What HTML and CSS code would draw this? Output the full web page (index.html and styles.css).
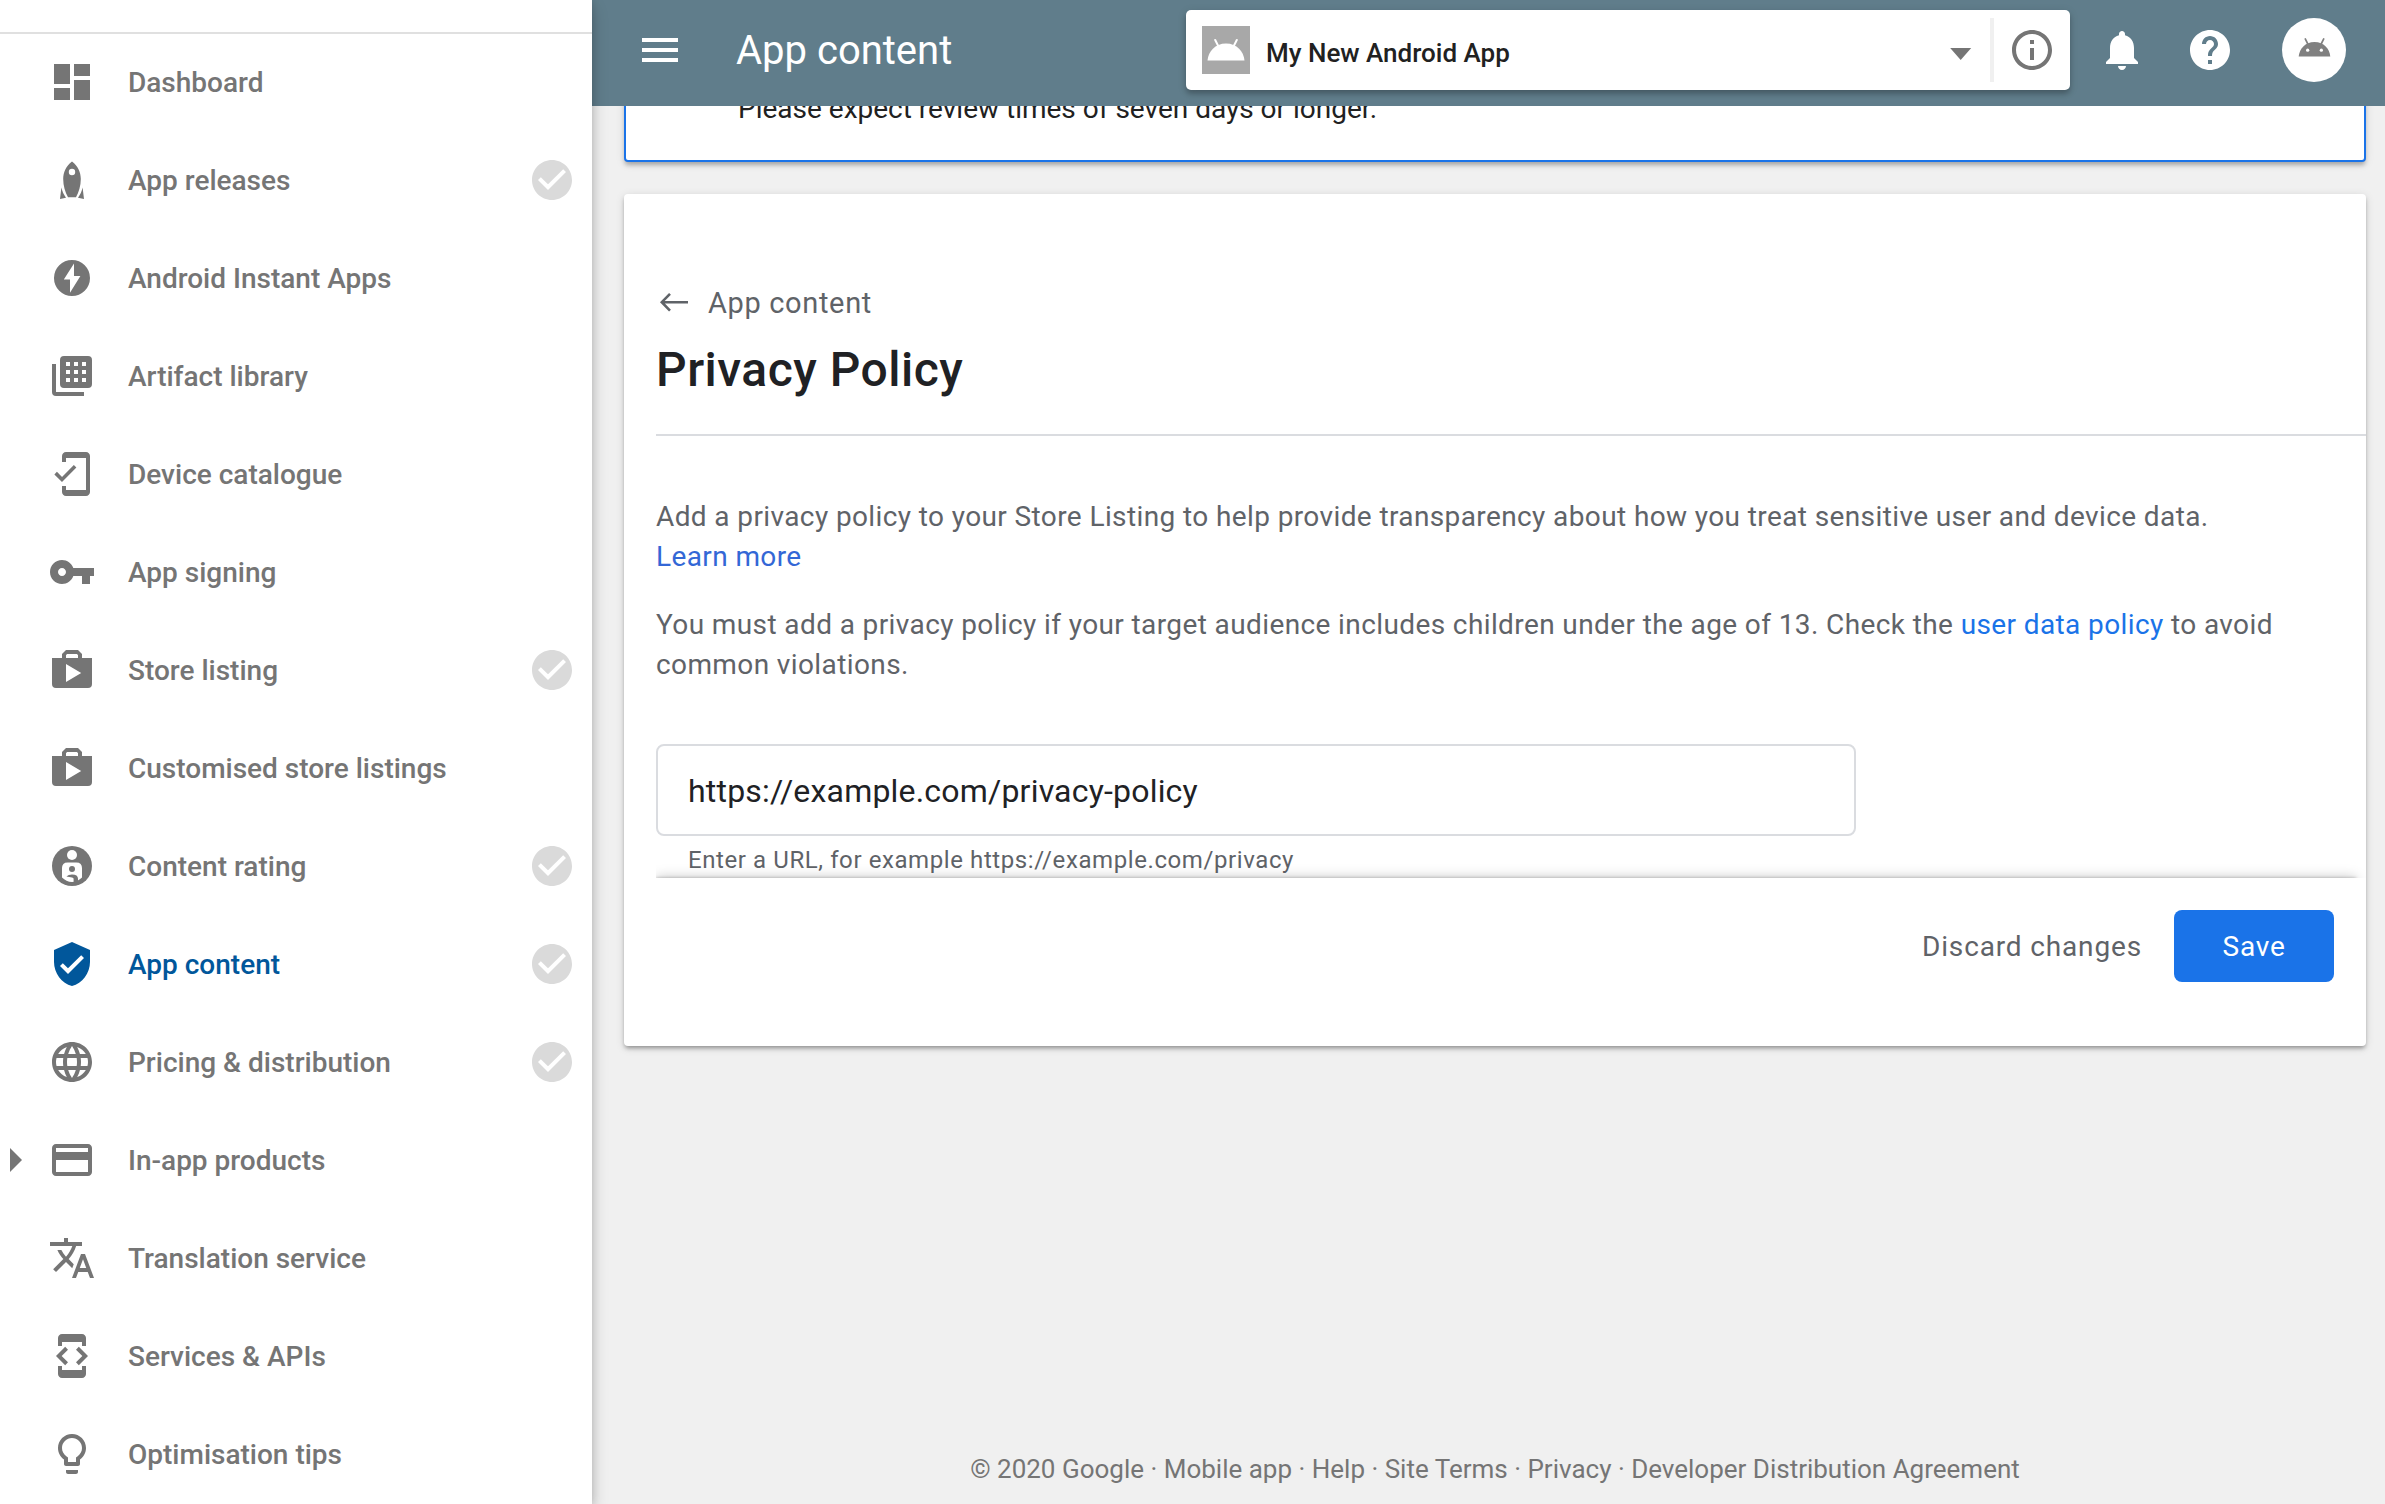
FILE: index.html
```html
<!DOCTYPE html>
<html lang="en-GB">
<head>
<meta charset="utf-8">
<title>App content</title>
<link rel="stylesheet" href="styles.css">
</head>
<body>
<svg class="symbols" aria-hidden="true">
  <symbol id="done" viewBox="0 0 24 24"><path d="M12 2C6.48 2 2 6.48 2 12s4.48 10 10 10 10-4.48 10-10S17.52 2 12 2zm-2 15l-5-5 1.41-1.41L10 14.17l7.59-7.59L19 8l-9 9z"/></symbol>
  <symbol id="shop" viewBox="0 0 24 24"><path fill-rule="evenodd" d="M2 6h5V4l2-2h6l2 2v2h5v13a2 2 0 0 1-2 2H4a2 2 0 0 1-2-2zM9.5 4L9 4.6V6h6V4.600L14.500 4zM9 18l7.600-4.500L9 9z"/></symbol>
  <symbol id="android" viewBox="0 0 48 48"><path d="M5.500 34.500C6.300 25.500 13 17.500 24 17.500S41.700 25.500 42.500 34.500z"/><path d="M13.200 14l3.300 6.500M34.800 14l-3.300 6.500" fill="none" stroke="currentColor" stroke-width="2" stroke-linecap="round"/><circle class="eye" cx="16" cy="27.200" r="1.900"/><circle class="eye" cx="32" cy="27.200" r="1.900"/></symbol>
</svg>
<div class="app">
  <nav class="sidebar">
    <div class="sidebar-top"></div>
    <ul class="nav-list">
      <li class="nav-item"><svg class="icon" viewBox="0 0 24 24"><path d="M3 13h8V3H3v10zm0 8h8v-6H3v6zm10 0h8V11h-8v10zm0-18v6h8V3h-8z"/></svg><span class="nav-label">Dashboard</span></li>
      <li class="nav-item"><svg class="icon" viewBox="0 0 24 24"><path fill-rule="evenodd" d="M12 2.700C9 5 7.600 8 7.600 11.500c0 3.500 1 6.500 2.400 9.100h4c1.400-2.600 2.400-5.600 2.400-9.100C16.400 8 15 5 12 2.700zM12 6.400a1.600 1.600 0 1 1 0 3.200 1.600 1.600 0 0 1 0-3.200z"/><path d="M6.700 15.800L6 21.500l3-.6c-1.100-1.500-1.900-3.200-2.300-5.100zM17.300 15.800l.7 5.700-3-.6c1.100-1.500 1.900-3.200 2.300-5.100z"/></svg><span class="nav-label">App releases</span><svg class="icon done"><use href="#done"/></svg></li>
      <li class="nav-item"><svg class="icon" viewBox="0 0 24 24"><path fill-rule="evenodd" d="M12 3a9 9 0 1 0 0 18 9 9 0 0 0 0-18zm1 1.700V11h3.200L11 19.400v-6.600H7.900z"/></svg><span class="nav-label">Android Instant Apps</span></li>
      <li class="nav-item"><svg class="icon" viewBox="0 0 24 24"><path d="M2 6v14a2 2 0 0 0 2 2h14v-2H4V6z"/><path fill-rule="evenodd" d="M8 2h12a2 2 0 0 1 2 2v12a2 2 0 0 1-2 2H8a2 2 0 0 1-2-2V4a2 2 0 0 1 2-2zM9 5v2h2V5zM13 5v2h2V5zM17 5v2h2V5zM9 9v2h2V9zM13 9v2h2V9zM17 9v2h2V9zM9 13v2h2v-2zM13 13v2h2v-2zM17 13v2h2v-2z"/></svg><span class="nav-label">Artifact library</span></li>
      <li class="nav-item"><svg class="icon" viewBox="0 0 24 24"><path d="M19 1H9c-1.100 0-2 .9-2 2v3h2V4h10v16H9v-2H7v3c0 1.100.9 2 2 2h10c1.100 0 2-.9 2-2V3c0-1.100-.9-2-2-2zM7.010 13.470l-2.550-2.550-1.270 1.270L7 16l7.190-7.190-1.270-1.270z"/></svg><span class="nav-label">Device catalogue</span></li>
      <li class="nav-item"><svg class="icon" viewBox="0 0 24 24"><path d="M12.650 10C11.830 7.670 9.610 6 7 6c-3.310 0-6 2.690-6 6s2.690 6 6 6c2.610 0 4.830-1.670 5.650-4H17v4h4v-4h2v-4H12.650zM7 14c-1.100 0-2-.9-2-2s.9-2 2-2 2 .9 2 2-.9 2-2 2z"/></svg><span class="nav-label">App signing</span></li>
      <li class="nav-item"><svg class="icon"><use href="#shop"/></svg><span class="nav-label">Store listing</span><svg class="icon done"><use href="#done"/></svg></li>
      <li class="nav-item"><svg class="icon"><use href="#shop"/></svg><span class="nav-label">Customised store listings</span></li>
      <li class="nav-item"><svg class="icon" viewBox="0 0 24 24"><circle cx="12" cy="12" r="10"/><circle class="cut" cx="12" cy="6.500" r="2.500"/><path class="cut" d="M7 13q0-2.800 2.800-2.800h4.400q2.800 0 2.800 2.800v4.700a8 8 0 0 1-5 2.300 8 8 0 0 1-5-2.300z"/><circle cx="12" cy="13.500" r="1.500"/><path d="M9.200 17.300q1-1.100 2.800-1.100 3 0 3 2.200V20.500h-2.200v-2.100q0-.6-.8-.7z"/></svg><span class="nav-label">Content rating</span><svg class="icon done"><use href="#done"/></svg></li>
      <li class="nav-item active"><svg class="icon" viewBox="0 0 24 24"><path d="M12 1L3 5v6c0 5.550 3.840 10.740 9 12 5.160-1.260 9-6.450 9-12V5l-9-4zm-2 16l-4-4 1.410-1.410L10 14.170l6.590-6.590L18 9l-8 8z"/></svg><span class="nav-label">App content</span><svg class="icon done"><use href="#done"/></svg></li>
      <li class="nav-item"><svg class="icon" viewBox="0 0 24 24"><path d="M11.990 2C6.470 2 2 6.480 2 12s4.470 10 9.990 10C17.520 22 22 17.520 22 12S17.520 2 11.990 2zm6.930 6h-2.950c-.32-1.250-.78-2.450-1.380-3.560 1.840.63 3.370 1.910 4.330 3.560zM12 4.040c.83 1.200 1.480 2.530 1.910 3.960h-3.820c.43-1.430 1.080-2.760 1.910-3.960zM4.260 14C4.100 13.360 4 12.690 4 12s.1-1.360.26-2h3.380c-.08.66-.14 1.320-.14 2s.06 1.340.14 2H4.260zm.82 2h2.950c.32 1.250.78 2.450 1.380 3.560-1.840-.63-3.370-1.900-4.330-3.560zm2.950-8H5.080c.96-1.660 2.490-2.930 4.330-3.560C8.810 5.550 8.350 6.750 8.030 8zM12 19.960c-.83-1.200-1.480-2.530-1.910-3.960h3.820c-.43 1.430-1.080 2.760-1.910 3.960zM14.340 14H9.660c-.09-.66-.16-1.320-.16-2s.07-1.350.16-2h4.680c.09.65.16 1.320.16 2s-.07 1.340-.16 2zm.25 5.560c.6-1.110 1.060-2.310 1.380-3.560h2.950c-.96 1.650-2.490 2.930-4.330 3.560zM16.360 14c.08-.66.14-1.320.14-2s-.06-1.340-.14-2h3.380c.16.64.26 1.310.26 2s-.1 1.360-.26 2h-3.380z"/></svg><span class="nav-label">Pricing &amp; distribution</span><svg class="icon done"><use href="#done"/></svg></li>
      <li class="nav-item"><span class="expander"></span><svg class="icon" viewBox="0 0 24 24"><path d="M20 4H4c-1.110 0-1.990.89-1.990 2L2 18c0 1.110.89 2 2 2h16c1.110 0 2-.89 2-2V6c0-1.110-.89-2-2-2zm0 14H4v-6h16v6zm0-10H4V6h16v2z"/></svg><span class="nav-label">In-app products</span></li>
      <li class="nav-item"><svg class="icon" viewBox="0 0 24 24"><path d="M12.870 15.070l-2.540-2.510.03-.03c1.740-1.940 2.980-4.170 3.710-6.530H17V4h-7V2H8v2H1v1.990h11.170C11.500 7.920 10.440 9.750 9 11.350 8.070 10.320 7.300 9.190 6.690 8h-2c.73 1.630 1.730 3.170 2.980 4.560l-5.090 5.020L4 19l5-5 3.110 3.110.76-2.040zM18.500 10h-2L12 22h2l1.120-3h4.750L21 22h2l-4.500-12zm-2.620 7l1.620-4.330L19.120 17h-3.240z"/></svg><span class="nav-label">Translation service</span></li>
      <li class="nav-item"><svg class="icon" viewBox="0 0 24 24"><path d="M7 5h10v2h2V3c0-1.100-.9-1.990-2-1.990L7 1c-1.100 0-2 .9-2 2v4h2V5zm8.410 11.590L20 12l-4.590-4.590L14 8.830 17.170 12 14 15.170l1.410 1.420zM10 15.170L6.830 12 10 8.830 8.590 7.410 4 12l4.590 4.590L10 15.170zM17 19H7v-2H5v4c0 1.100.9 2 2 2h10c1.100 0 2-.9 2-2v-4h-2v2z"/></svg><span class="nav-label">Services &amp; APIs</span></li>
      <li class="nav-item"><svg class="icon" viewBox="0 0 24 24"><path d="M9 21c0 .55.45 1 1 1h4c.55 0 1-.45 1-1v-1H9v1zm3-19C8.140 2 5 5.140 5 9c0 2.380 1.190 4.470 3 5.740V17c0 .55.45 1 1 1h6c.55 0 1-.45 1-1v-2.260c1.810-1.270 3-3.360 3-5.740 0-3.860-3.140-7-7-7zm2.850 11.100l-.85.6V16h-4v-2.300l-.85-.6C7.800 12.160 7 10.630 7 9c0-2.760 2.240-5 5-5s5 2.240 5 5c0 1.630-.8 3.160-2.150 4.100z"/></svg><span class="nav-label">Optimisation tips</span></li>
    </ul>
  </nav>

  <div class="page">
    <header class="topbar">
      <svg class="icon" viewBox="0 0 24 24"><path d="M3 18h18v-2H3v2zm0-5h18v-2H3v2zm0-7v2h18V6H3z"/></svg>
      <h1 class="topbar-title">App content</h1>
      <div class="app-picker">
        <span class="app-thumb"><svg class="icon"><use href="#android"/></svg></span>
        <span class="app-name">My New Android App</span>
        <svg class="icon" viewBox="0 0 24 24"><path d="M7.100 11h10.500l-5.250 6z"/></svg>
        <span class="picker-divider"></span>
        <svg class="icon info" viewBox="0 0 24 24"><path d="M11 17h2v-6h-2v6zm1-15C6.480 2 2 6.480 2 12s4.480 10 10 10 10-4.480 10-10S17.520 2 12 2zm0 18c-4.410 0-8-3.590-8-8s3.590-8 8-8 8 3.590 8 8-3.590 8-8 8zM11 9h2V7h-2v2z"/></svg>
      </div>
      <svg class="icon bell" viewBox="0 0 24 24"><path d="M12 22c1.100 0 2-.9 2-2h-4c0 1.100.89 2 2 2zm6-6v-5c0-3.070-1.640-5.640-4.500-6.320V4c0-.83-.67-1.500-1.500-1.500s-1.500.67-1.500 1.500v.68C7.630 5.360 6 7.920 6 11v5l-2 2v1h16v-1l-2-2z"/></svg>
      <svg class="icon help" viewBox="0 0 24 24"><path d="M12 2C6.480 2 2 6.480 2 12s4.480 10 10 10 10-4.480 10-10S17.520 2 12 2zm1 17h-2v-2h2v2zm2.070-7.750l-.9.92C13.450 12.900 13 13.500 13 15h-2v-.5c0-1.100.45-2.100 1.170-2.830l1.240-1.260c.37-.36.59-.86.59-1.410 0-1.100-.9-2-2-2s-2 .9-2 2H8c0-2.210 1.790-4 4-4s4 1.790 4 4c0 .88-.36 1.680-.93 2.250z"/></svg>
      <span class="avatar"><svg class="avatar-icon"><use href="#android"/></svg></span>
    </header>

    <main class="content">
      <section class="banner"><p class="banner-text">Please expect review times of seven days or longer.</p></section>

      <section class="card">
        <a class="crumb"><svg class="crumb-icon" viewBox="0 0 36 36"><path d="M32 17.200H6M14 8.800L5.800 17.200l8.200 8.400" fill="none" stroke="currentColor" stroke-width="2.600"/></svg>App content</a>
        <h2 class="card-title">Privacy Policy</h2>
        <div class="card-body">
          <p class="copy">Add a privacy policy to your Store Listing to help provide transparency about how you treat sensitive user and device data.<br><a class="link learn">Learn more</a></p>
          <p class="copy">You must add a privacy policy if your target audience includes children under the age of 13. Check the <a class="link">user data policy</a> to avoid<br>common violations.</p>
          <div class="field">https://example.com/privacy-policy</div>
          <p class="hint">Enter a URL, for example https://example.com/privacy</p>
        </div>
        <div class="actions">
          <span class="discard">Discard changes</span>
          <span class="save">Save</span>
        </div>
      </section>

      <footer class="footer">© 2020 Google · Mobile app · Help · Site Terms · Privacy · Developer Distribution Agreement</footer>
    </main>
  </div>
</div>
</body>
</html>
```
FILE: styles.css
```css
* { box-sizing: border-box; }

body {
  margin: 0;
  font-family: Roboto, "Noto Sans", sans-serif;
  background: #f0f0f0;
}

h1, h2, p, ul { margin: 0; padding: 0; font-weight: 400; }

.symbols { display: none; }

.app {
  display: flex;
  height: 1504px;
  overflow: hidden;
}

.icon {
  width: 48px;
  height: 48px;
  flex: none;
  fill: currentColor;
}

/* Sidebar */
.sidebar {
  position: relative;
  z-index: 3;
  flex: none;
  width: 592px;
  height: 1504px;
  background: #fff;
  box-shadow: 0 0 8px rgba(0, 0, 0, .14), 0 8px 16px rgba(0, 0, 0, .2);
}

.sidebar-top {
  height: 34px;
  border-bottom: 2px solid #e0e0e0;
}

.nav-list {
  margin-top: -1px;
  list-style: none;
}

.nav-item {
  position: relative;
  display: flex;
  align-items: center;
  height: 98px;
  padding: 0 16px 0 48px;
  color: #757575;
}

.nav-label {
  flex: 1;
  margin-left: 32px;
  padding-top: 2px;
  font-size: 28px;
  font-weight: 500;
  line-height: 40px;
}

.active { color: #01579b; }
.done { color: #dadada; }
.cut { fill: #fff; }

.expander {
  position: absolute;
  left: 10px;
  top: 37px;
  border-left: 12px solid #757575;
  border-top: 12px solid transparent;
  border-bottom: 12px solid transparent;
}

/* Top bar */
.page {
  flex: 1;
  display: flex;
  flex-direction: column;
}

.topbar {
  position: relative;
  z-index: 2;
  flex: none;
  display: flex;
  align-items: center;
  height: 106px;
  padding: 0 39px 6px 44px;
  background: #607d8b;
  color: #fff;
}

.topbar-title {
  flex: 1;
  margin-left: 52px;
  padding-top: 2px;
  font-size: 40px;
  line-height: 48px;
}

.app-picker {
  display: flex;
  align-items: center;
  width: 884px;
  height: 80px;
  padding: 0 14px 0 16px;
  border-radius: 5px;
  background: #fff;
  color: #757575;
  box-shadow: 0 4px 5px rgba(0, 0, 0, .2), 0 2px 10px rgba(0, 0, 0, .12);
}

.app-thumb {
  display: flex;
  background: #a8a8a8;
  color: #fff;
}

.app-thumb .eye { fill: #a8a8a8; }

.app-name {
  flex: 1;
  margin-left: 16px;
  padding-top: 6px;
  color: #212121;
  font-size: 26px;
  font-weight: 500;
  line-height: 32px;
}

.picker-divider {
  width: 4px;
  height: 64px;
  margin: 0 14px 0 6px;
  background: #f0f0f0;
}

.bell { margin-left: 28px; }
.help { margin-left: 40px; }

.avatar {
  display: flex;
  align-items: center;
  justify-content: center;
  width: 64px;
  height: 64px;
  margin-left: 48px;
  padding-bottom: 6px;
  border-radius: 50%;
  background: #fff;
  color: #808080;
}

.avatar-icon {
  width: 41px;
  height: 41px;
  fill: currentColor;
}

.eye { fill: #fff; }

/* Content */
.content {
  flex: 1;
  display: flex;
  flex-direction: column;
  padding: 0 19px 19px 32px;
}

.banner {
  margin-top: -52px;
  padding: 33px 112px 31px;
  border: 2px solid #1a73e8;
  border-radius: 4px;
  background: #fff;
  box-shadow: 0 4px 4px -1px rgba(0, 0, 0, .25), 0 2px 10px rgba(0, 0, 0, .1);
}

.banner-text {
  color: #212121;
  font-size: 28px;
  line-height: 40px;
}

.card {
  margin-top: 32px;
  padding: 89px 0 0 32px;
  border-radius: 4px;
  background: #fff;
  box-shadow: 0 3px 4px -1px rgba(0, 0, 0, .35), 0 2px 10px rgba(0, 0, 0, .12);
}

.crumb {
  display: flex;
  align-items: center;
  gap: 16px;
  color: #5f6368;
  font-size: 29px;
  line-height: 40px;
  letter-spacing: .65px;
}

.crumb-icon { width: 36px; height: 36px; }

.card-title {
  padding: 19px 0 36px;
  border-bottom: 2px solid #dadce0;
  color: #202124;
  font-size: 48px;
  font-weight: 500;
  line-height: 56px;
  letter-spacing: .5px;
}

.card-body {
  display: flex;
  flex-direction: column;
  padding: 61px 0 2px;
}

.copy {
  margin-bottom: 28px;
  color: #5f6368;
  font-size: 28px;
  line-height: 40px;
  letter-spacing: .39px;
  white-space: nowrap;
}

.link { color: #1a73e8; }
.learn { color: #3367d6; }

.field {
  width: 1200px;
  height: 92px;
  margin-top: 31px;
  padding: 1px 30px 0;
  border: 2px solid #dadce0;
  border-radius: 8px;
  color: #202124;
  font-size: 32px;
  line-height: 88px;
  letter-spacing: .2px;
}

.hint {
  margin: 8px 0 0 32px;
  color: #5f6368;
  font-size: 24px;
  line-height: 32px;
  letter-spacing: .59px;
}

/* The shadow rises above the action bar only, never beside it */
.actions {
  display: flex;
  align-items: center;
  justify-content: flex-end;
  gap: 32px;
  margin-right: 10px;
  padding: 32px 22px 64px 0;
  background: #fff;
  font-size: 28px;
  box-shadow: 0 0 3px rgba(0, 0, 0, .25), 0 0 12px rgba(0, 0, 0, .25);
  clip-path: polygon(0 -20px, calc(100% + 10px) -20px, calc(100% + 10px) 0, 100% 0, 100% 100%, 0 100%);
}

.discard {
  padding-top: 1px;
  color: #5f6368;
  letter-spacing: .85px;
}

.save {
  width: 160px;
  height: 72px;
  padding-top: 1px;
  border-radius: 8px;
  background: #1a73e8;
  color: #fff;
  line-height: 72px;
  letter-spacing: .8px;
  text-align: center;
}

.footer {
  margin-top: auto;
  color: #757575;
  font-size: 26px;
  line-height: 32px;
  text-align: center;
}
```
